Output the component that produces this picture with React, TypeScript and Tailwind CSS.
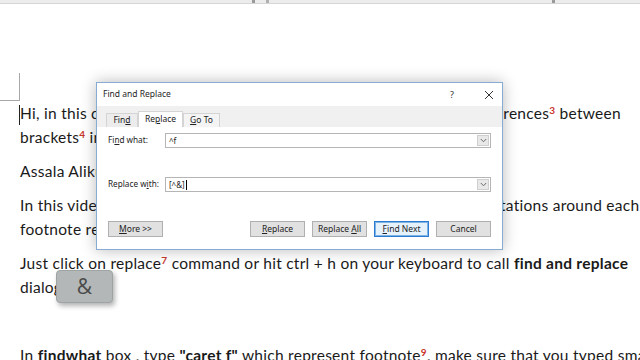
import React from "react";

const Sup = ({ n }: { n: string }) => (
  <sup className="text-[10px] font-bold text-[#c8362c]">{n}</sup>
);

const U = ({ children }: { children: React.ReactNode }) => (
  <span className="underline underline-offset-1">{children}</span>
);

function Chevron() {
  return (
    <svg width="7" height="5" viewBox="0 0 7 5">
      <path d="M0.8 1 L3.5 3.8 L6.2 1" fill="none" stroke="#6b6b6b" strokeWidth="1" />
    </svg>
  );
}

function Combo({ value, cursor }: { value: string; cursor?: boolean }) {
  return (
    <div className="flex h-[15px] w-[332px] items-stretch border border-[#b5b5b5] bg-white">
      <div className="flex flex-1 items-center pl-[3px] text-[8px] text-[#222]">
        <span>{value}</span>
        {cursor && <span className="ml-px inline-block h-[10px] w-px bg-black" />}
      </div>
      <div className="m-px flex w-[12px] items-center justify-center border border-[#cfcfcf] bg-[#e8e8e8]">
        <Chevron />
      </div>
    </div>
  );
}

function Btn({ children, primary }: { children: React.ReactNode; primary?: boolean }) {
  return (
    <div
      className={
        primary
          ? "flex h-[16px] w-[55px] items-center justify-center border border-[#2b7bd0] bg-[#e5f1fb] text-[8.5px] text-[#222] shadow-[inset_0_0_0_1px_#7fb3e6]"
          : "flex h-[16px] w-[55px] items-center justify-center border border-[#b0b0b0] bg-[#e1e1e1] text-[8.5px] text-[#222]"
      }
    >
      <span className="whitespace-pre">{children}</span>
    </div>
  );
}

function Dialog() {
  return (
    <div
      className="absolute left-[96px] top-[82px] flex h-[168px] w-[407px] flex-col border border-[#86acd4] bg-white shadow-[0_0_14px_rgba(0,0,0,0.28)]"
      style={{ fontFamily: '"Noto Sans", "Open Sans", sans-serif' }}
    >
      <div className="flex h-[23px] items-center pl-[6px] text-[8.5px] text-[#1e1e1e]">
        <span className="flex-1">Find and Replace</span>
        <span className="w-[33px] text-[9px] text-[#333]">?</span>
        <span className="mr-[7px] flex w-[12px] items-center justify-center">
          <svg width="10" height="10" viewBox="0 0 10 10">
            <path d="M1 1 L9 9 M9 1 L1 9" stroke="#333" strokeWidth="1" />
          </svg>
        </span>
      </div>
      <div className="flex h-[21px] items-end bg-[#f0f0f0] pl-[9px] text-[8.5px] text-[#222]">
        <div className="flex h-[14px] w-[32px] items-center justify-center border border-b-0 border-[#d4d4d4] bg-[#ececec]">
          <span>
            Fin<U>d</U>
          </span>
        </div>
        <div className="flex h-[16px] w-[45px] items-center justify-center border border-b-0 border-[#d4d4d4] bg-white">
          <span>
            Re<U>p</U>lace
          </span>
        </div>
        <div className="flex h-[14px] w-[37px] items-center justify-center border border-b-0 border-[#d4d4d4] bg-[#f4f4f4]">
          <span>
            <U>G</U>o To
          </span>
        </div>
      </div>
      <div className="flex flex-1 flex-col px-[11px] pt-[6px] text-[8.2px] text-[#222]">
        <div className="flex items-center">
          <span className="w-[58px] whitespace-nowrap">
            Fi<U>n</U>d what:
          </span>
          <Combo value="^f" />
        </div>
        <div className="mt-[29px] flex items-center">
          <span className="w-[58px] whitespace-nowrap">
            Replace w<U>i</U>th:
          </span>
          <Combo value="[^&]" cursor />
        </div>
        <div className="mt-[29px] flex items-center">
          <Btn>
            <U>M</U>ore &gt;&gt;
          </Btn>
          <div className="ml-auto flex gap-[7px]">
            <Btn>
              <U>R</U>eplace
            </Btn>
            <Btn>
              Replace <U>A</U>ll
            </Btn>
            <Btn primary>
              <U>F</U>ind Next
            </Btn>
            <Btn>Cancel</Btn>
          </div>
        </div>
      </div>
    </div>
  );
}

export default function App() {
  return (
    <div className="relative h-[360px] w-[640px] overflow-hidden bg-white">
      {/* ruler */}
      <div className="relative h-[4px] border-b border-[#d6d6d6] bg-[#ececec]">
        <span className="absolute left-[252px] top-0 h-[3px] w-[3px] bg-[#9a9a9a]" />
        <span className="absolute left-[266px] top-0 h-[3px] w-[3px] bg-[#b0b0b0]" />
        <span className="absolute left-[552px] top-0 h-[3px] w-[3px] bg-[#9a9a9a]" />
      </div>
      <div className="h-[69px]" />
      <div className="h-[28px] w-[20px] border-b border-r border-[#a8a8a8]" />
      <div
        className="pl-[20px] text-[15.5px] leading-[24px] tracking-[0.27px] text-[#1a1a1a]"
        style={{ fontFamily: 'Lato, "Open Sans", sans-serif' }}
      >
        <div className="mb-[10px]">
          <div className="whitespace-nowrap">
            <span className="-ml-px inline-block h-[20px] w-px bg-[#222] align-middle" />
            Hi, in this course we'll learn how to put the numbers of footnote references
            <Sup n="3" /> between
          </div>
          <div className="whitespace-nowrap">
            brackets<Sup n="4" /> in Microsoft Word document.
          </div>
        </div>
        <div className="mb-[10px] whitespace-nowrap">Assala Alikum everyone.</div>
        <div className="mb-[10px]">
          <div className="whitespace-nowrap">
            In this video we will learn how to quickly add square brackets or quotations around
            each
          </div>
          <div className="whitespace-nowrap">footnote reference in the document.</div>
        </div>
        <div className="mb-[10px]">
          <div className="whitespace-nowrap">
            Just click on replace<Sup n="7" /> command or hit ctrl + h on your keyboard to call{" "}
            <b>find and replace</b>
          </div>
          <div className="whitespace-nowrap">dialog box.</div>
        </div>
        <div className="mb-[10px] h-[24px]" />
        <div className="whitespace-nowrap">
          In <b>findwhat</b> box , type <b>"caret f"</b> which represent footnote<Sup n="9" />, make
          sure that you typed small letter f.
        </div>
      </div>
      <Dialog />
      <div
        className="absolute left-[56px] top-[270px] flex h-[33px] w-[57px] items-center justify-center rounded-[4px] border border-[#9ea3a3] bg-[#b3b7b7] text-[21px] text-[#4a4a4a] shadow-[2px_3px_5px_rgba(0,0,0,0.3)]"
        style={{ fontFamily: '"Open Sans", sans-serif' }}
      >
        &amp;
      </div>
    </div>
  );
}
